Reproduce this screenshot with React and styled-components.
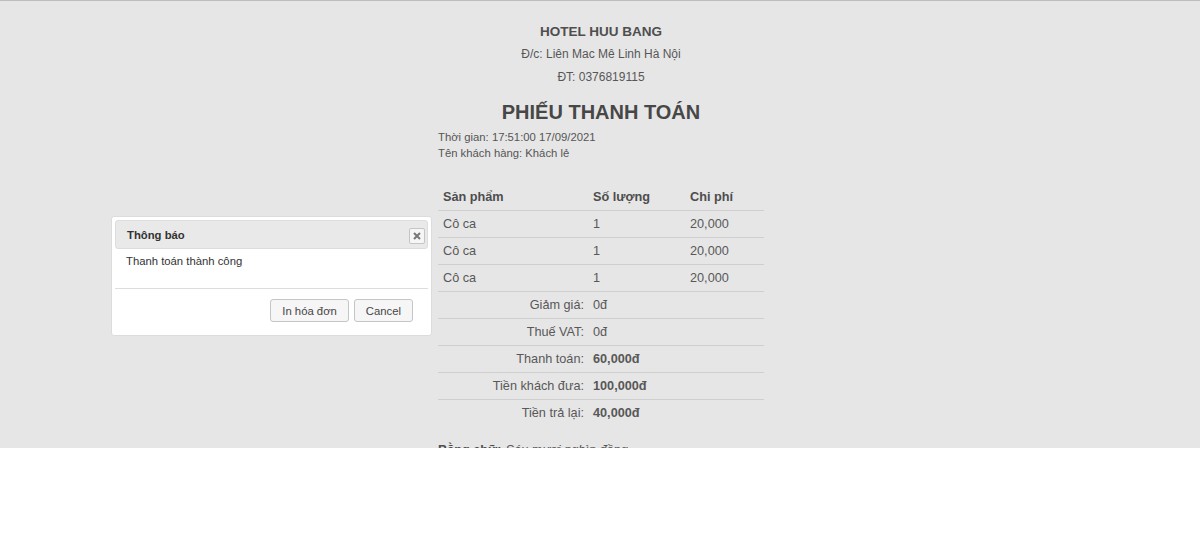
import React from "react";
import styled, { createGlobalStyle } from "styled-components";

const GlobalStyle = createGlobalStyle`
  html, body {
    margin: 0;
    padding: 0;
    background: #fff;
    font-family: "Liberation Sans", Arial, sans-serif;
  }
`;

const Screen = styled.div`
  position: relative;
  height: 448px;
  overflow: hidden;
  background: #e6e6e6;
  border-top: 1px solid #bdbdbd;
  box-sizing: border-box;
  color: #555;
`;

const Receipt = styled.div`
  width: 326px;
  margin: 0 auto;
  padding-top: 19px;
  transform: translateX(1px);
`;

const ShopLine = styled.div`
  text-align: center;
  font-size: ${props => (props.bold ? "13.5px" : "12px")};
  font-weight: ${props => (props.bold ? "bold" : "normal")};
  line-height: 23px;
  color: ${props => (props.bold ? "#4e4e4e" : "#575757")};
`;

const Title = styled.h2`
  margin: 9px 0 3px;
  text-align: center;
  font-size: 20px;
  line-height: 28px;
  font-weight: bold;
  color: #474747;
`;

const Info = styled.div`
  font-size: 11.3px;
  line-height: 16px;
  color: #555;
`;

const Table = styled.div`
  margin-top: 23px;
  font-size: 12.7px;
`;

const Row = styled.div`
  display: grid;
  grid-template-columns: 150px 97px 1fr;
  height: ${props => (props.head ? "26px" : "27px")};
  border-top: ${props => (props.head ? "none" : "1px solid #cfcfcf")};
  box-sizing: border-box;
  align-items: center;
  font-weight: ${props => (props.head ? "bold" : "normal")};
  color: ${props => (props.head ? "#4d4d4d" : "#585858")};
`;

const Cell = styled.div`
  padding: 0 5px;
  text-align: ${props => (props.right ? "right" : "left")};
  padding-right: ${props => (props.right ? "4px" : "5px")};
  font-weight: ${props => (props.strong ? "bold" : "inherit")};
  grid-column: ${props => (props.span ? `span ${props.span}` : "auto")};
`;

const InWords = styled.div`
  margin-top: 17px;
  font-size: 12.7px;
  color: #555;

  b {
    color: #4d4d4d;
  }
  i {
    margin-left: 4px;
  }
`;

const Dialog = styled.div`
  position: absolute;
  left: 111px;
  top: 215px;
  width: 321px;
  padding: 3px;
  box-sizing: border-box;
  background: #fff;
  border: 1px solid #dcdcdc;
  border-radius: 3px;
  font-size: 11.3px;
  color: #333;
`;

const TitleBar = styled.div`
  display: flex;
  align-items: center;
  justify-content: space-between;
  height: 29px;
  box-sizing: border-box;
  padding: 0 2px 0 11px;
  background: #e9e9e9;
  border: 1px solid #dddddd;
  border-radius: 3px;
  font-weight: bold;
`;

const CloseButton = styled.button`
  width: 16px;
  height: 16px;
  padding: 0;
  margin-top: 2px;
  display: flex;
  align-items: center;
  justify-content: center;
  background: #f6f6f6;
  border: 1px solid #c5c5c5;
  border-radius: 2px;
`;

const Body = styled.div`
  height: 39px;
  padding: 6px 11px 0;
  box-sizing: border-box;
  line-height: 13px;
`;

const Footer = styled.div`
  display: flex;
  justify-content: flex-end;
  gap: 5px;
  padding: 10px 15px 10px 0;
  border-top: 1px solid #dddddd;
`;

const Button = styled.button`
  height: 23px;
  padding: 0 11px;
  background: #f6f6f6;
  border: 1px solid #c5c5c5;
  border-radius: 3px;
  font-family: "Liberation Sans", Arial, sans-serif;
  font-size: 11.3px;
  color: #454545;
  min-width: ${props => props.w}px;
`;

const items = [
  { name: "Cô ca", qty: 1, price: "20,000" },
  { name: "Cô ca", qty: 1, price: "20,000" },
  { name: "Cô ca", qty: 1, price: "20,000" }
];

const summary = [
  { label: "Giảm giá:", value: "0đ" },
  { label: "Thuế VAT:", value: "0đ" },
  { label: "Thanh toán:", value: "60,000đ", strong: true },
  { label: "Tiền khách đưa:", value: "100,000đ", strong: true },
  { label: "Tiền trả lại:", value: "40,000đ", strong: true }
];

const App = () => (
  <>
    <GlobalStyle />
    <Screen>
      <Receipt>
        <ShopLine bold>HOTEL HUU BANG</ShopLine>
        <ShopLine>Đ/c: Liên Mac Mê Linh Hà Nội</ShopLine>
        <ShopLine>ĐT: 0376819115</ShopLine>
        <Title>PHIẾU THANH TOÁN</Title>
        <Info>Thời gian: 17:51:00 17/09/2021</Info>
        <Info>Tên khách hàng: Khách lẻ</Info>
        <Table>
          <Row head>
            <Cell>Sản phẩm</Cell>
            <Cell>Số lượng</Cell>
            <Cell>Chi phí</Cell>
          </Row>
          {items.map((item, index) => (
            <Row key={index}>
              <Cell>{item.name}</Cell>
              <Cell>{item.qty}</Cell>
              <Cell>{item.price}</Cell>
            </Row>
          ))}
          {summary.map(line => (
            <Row key={line.label}>
              <Cell right>{line.label}</Cell>
              <Cell span={2} strong={line.strong}>
                {line.value}
              </Cell>
            </Row>
          ))}
        </Table>
        <InWords>
          <b>Bằng chữ:</b>
          <i>Sáu mươi nghìn đồng</i>
        </InWords>
      </Receipt>

      <Dialog>
        <TitleBar>
          <span>Thông báo</span>
          <CloseButton aria-label="close">
            <svg width="8" height="8" viewBox="0 0 8 8">
              <path d="M1 1 L7 7 M7 1 L1 7" stroke="#777" strokeWidth="2" />
            </svg>
          </CloseButton>
        </TitleBar>
        <Body>Thanh toán thành công</Body>
        <Footer>
          <Button w={78}>In hóa đơn</Button>
          <Button w={58}>Cancel</Button>
        </Footer>
      </Dialog>
    </Screen>
  </>
);

export default App;
